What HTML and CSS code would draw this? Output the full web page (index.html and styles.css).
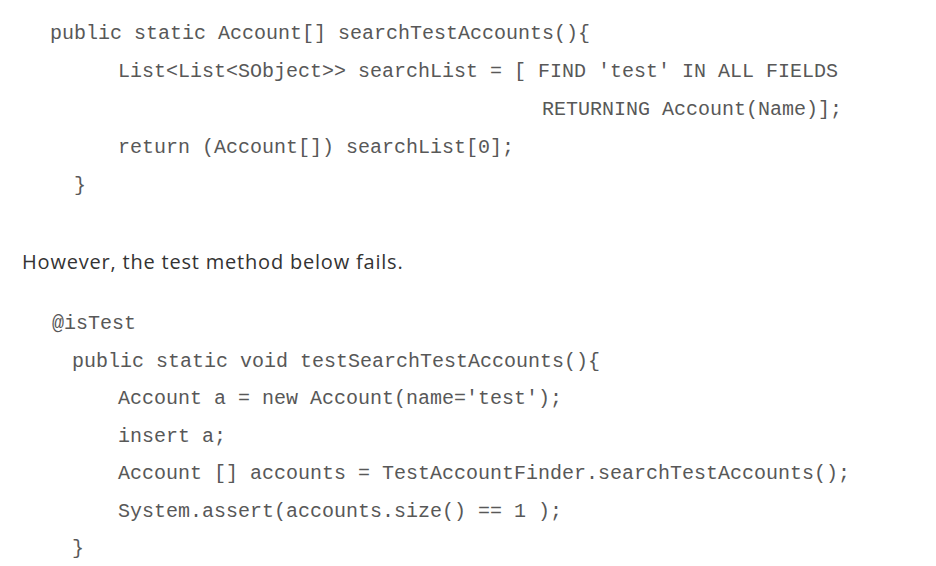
FILE: index.html
```html
<!DOCTYPE html>
<html>
<head>
<meta charset="utf-8">
<link rel="stylesheet" href="styles.css">
</head>
<body>
<div class="page">
  <div class="code code-top">
    <div class="ln ind-a">public static Account[] searchTestAccounts(){</div>
    <div class="ln ind-c">List&lt;List&lt;SObject&gt;&gt; searchList = [ FIND 'test' IN ALL FIELDS</div>
    <div class="ln ind-r">RETURNING Account(Name)];</div>
    <div class="ln ind-c">return (Account[]) searchList[0];</div>
    <div class="ln ind-e">}</div>
  </div>
  <p class="prose">However, the test method below fails.</p>
  <div class="code code-bottom">
    <div class="ln ind-a2">@isTest</div>
    <div class="ln ind-b">public static void testSearchTestAccounts(){</div>
    <div class="ln ind-c">Account a = new Account(name='test');</div>
    <div class="ln ind-c">insert a;</div>
    <div class="ln ind-c">Account [] accounts = TestAccountFinder.searchTestAccounts();</div>
    <div class="ln ind-c">System.assert(accounts.size() == 1 );</div>
    <div class="ln ind-b">}</div>
  </div>
</div>
</body>
</html>
```

FILE: styles.css
```css
html, body {
  margin: 0;
  padding: 0;
  background: #ffffff;
}

.page {
  width: 936px;
  height: 566px;
  overflow: hidden;
  padding-top: 15px;
  box-sizing: border-box;
}

.code {
  font-family: "Liberation Mono", "Courier New", monospace;
  font-size: 20px;
  color: #585858;
}

.ln {
  white-space: pre;
}

.code-top .ln {
  height: 38px;
  line-height: 38px;
}

.code-bottom .ln {
  height: 37.5px;
  line-height: 37.5px;
}

.ind-a { padding-left: 50px; }
.ind-a2 { padding-left: 52px; }
.ind-b { padding-left: 72px; }
.ind-c { padding-left: 118px; }
.ind-r { padding-left: 542px; }
.ind-e { padding-left: 74px; }

.prose {
  margin: 42px 0 28px 0;
  padding-left: 22px;
  font-family: "Open Sans", "Noto Sans", sans-serif;
  font-size: 20px;
  letter-spacing: 0.8px;
  line-height: 30px;
  height: 30px;
  color: #333333;
}
```
